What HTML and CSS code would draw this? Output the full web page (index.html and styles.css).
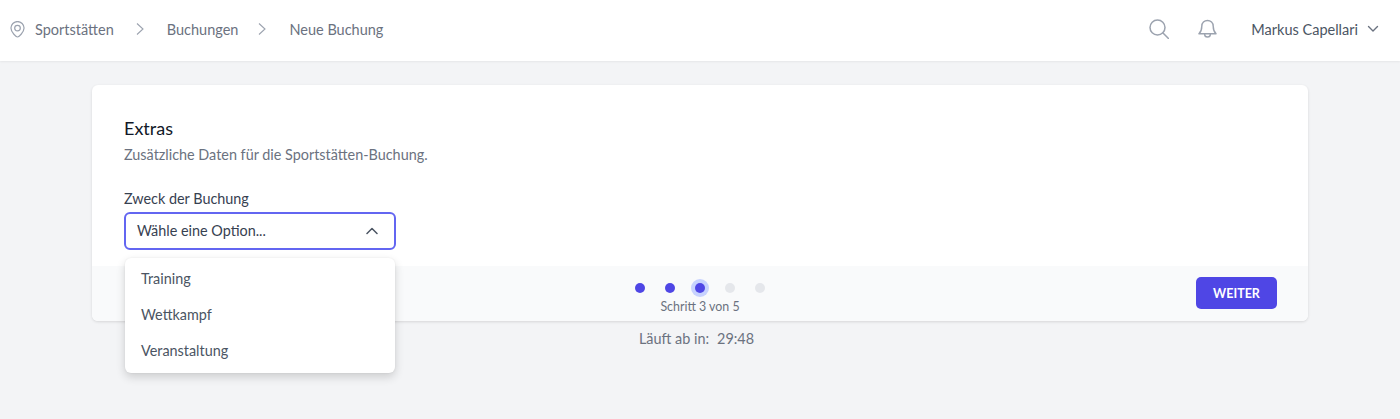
FILE: index.html
```html
<!DOCTYPE html>
<html lang="de">

<head>
  <meta charset="UTF-8" />
  <title>Neue Buchung</title>
  <link rel="stylesheet" href="styles.css">
</head>

<body>
  <header class="topbar">
    <nav class="crumbs">
      <svg class="pin" viewBox="0 0 16 18" fill="none" stroke="currentColor" stroke-width="1.300" stroke-linecap="round" stroke-linejoin="round">
        <path d="M8 17C7 17 1 12.300 1 7.500a7 7 0 0 1 14 0C15 12.300 9 17 8 17z" />
        <circle cx="8" cy="7.500" r="3" />
      </svg>
      <a>Sportstätten</a>
      <svg class="sep" viewBox="0 0 10 14" fill="none" stroke="currentColor" stroke-width="1.100"><path d="M2 1.500 8 7l-6 5.500" /></svg>
      <a>Buchungen</a>
      <svg class="sep sep-tight" viewBox="0 0 10 14" fill="none" stroke="currentColor" stroke-width="1.100"><path d="M2 1.500 8 7l-6 5.500" /></svg>
      <a>Neue Buchung</a>
    </nav>
    <div class="tools">
      <svg class="search" viewBox="0 0 20 20" fill="none" stroke="currentColor" stroke-width="1.500" stroke-linecap="round"><circle cx="8.500" cy="8.500" r="7.500" /><path d="m14 14 5.500 5.500" /></svg>
      <svg class="bell" viewBox="0 0 20 20" fill="none" stroke="currentColor" stroke-width="1.500" stroke-linecap="round" stroke-linejoin="round"><path d="M10 1a6 6 0 0 0-6 6c0 5-1.500 6.500-3 8h18c-1.500-1.500-3-3-3-8a6 6 0 0 0-6-6z" /><path d="M7 15.500a3 3 0 0 0 6 0" /></svg>
      <div class="user">
        <span>Markus Capellari</span>
        <svg class="user-caret" viewBox="0 0 12 8" fill="none" stroke="currentColor" stroke-width="1.400" stroke-linecap="round" stroke-linejoin="round"><path d="m1.500 1.500 4.500 4.500 4.500-4.500" /></svg>
      </div>
    </div>
  </header>

  <main class="content">
    <section class="card">
      <div class="card-body">
        <h2>Extras</h2>
        <p class="hint">Zusätzliche Daten für die Sportstätten-Buchung.</p>
        <label class="field-label">Zweck der Buchung</label>
        <div class="select-wrap">
          <div class="select">
            <span>Wähle eine Option...</span>
            <svg class="select-caret" viewBox="0 0 12 8" fill="none" stroke="currentColor" stroke-width="1.500" stroke-linecap="round" stroke-linejoin="round"><path d="m1 6.500 5-5 5 5" /></svg>
          </div>
          <ul class="options">
            <li>Training</li>
            <li>Wettkampf</li>
            <li>Veranstaltung</li>
          </ul>
        </div>
      </div>
      <div class="card-foot">
        <div class="steps">
          <div class="dots">
            <span class="dot done"></span>
            <span class="dot done"></span>
            <span class="dot current"></span>
            <span class="dot"></span>
            <span class="dot"></span>
          </div>
          <p class="step-text">Schritt 3 von 5</p>
        </div>
        <button class="next">WEITER</button>
      </div>
    </section>
    <p class="timer"><span>Läuft ab in:</span><span>29:48</span></p>
  </main>
</body>

</html>
```

FILE: styles.css
```css
/* Base */
body {
  margin: 0;
  height: 419px;
  overflow: hidden;
  font-family: 'Lato', 'Noto Sans', sans-serif;
  font-size: 14.4px;
  background-color: #f3f4f6;
  color: #4b5563;
}

/* Top bar */
.topbar {
  height: 61px;
  box-sizing: border-box;
  background-color: #fff;
  box-shadow: 0 1px 2px rgba(0, 0, 0, 0.06);
  display: flex;
  justify-content: space-between;
  align-items: center;
  padding: 0 21px 3px 10px;
  font-size: 14.5px;
}

.crumbs {
  display: flex;
  align-items: center;
  color: #6b7280;
}

.pin {
  width: 15px;
  height: 17px;
  margin-right: 10px;
  color: #9ca3af;
}

.sep {
  width: 10px;
  height: 14px;
  margin: 0 22px 0 21px;
  color: #9ca3af;
}

.sep-tight {
  margin: 0 22px 0 19px;
}

.tools {
  display: flex;
  align-items: center;
  color: #9ca3af;
}

.search {
  width: 20px;
  height: 20px;
}

.bell {
  width: 19px;
  height: 20px;
  margin-left: 29px;
}

.user {
  display: flex;
  align-items: center;
  margin-left: 34px;
  color: #4b5563;
}

.user-caret {
  width: 12px;
  height: 8px;
  margin-left: 9px;
  color: #6b7280;
}

/* Card */
.content {
  width: 1216px;
  margin: 24px auto 0;
}

.card {
  background-color: #fff;
  border-radius: 6px;
  box-shadow: 0 1px 3px rgba(0, 0, 0, 0.12);
}

.card-body {
  height: 181px;
  box-sizing: border-box;
  padding: 31px 32px 0;
}

.card-body h2 {
  margin: 0;
  font-size: 18px;
  line-height: 24px;
  font-weight: 400;
  color: #111827;
}

.hint {
  margin: 5px 0 0;
  line-height: 20px;
  color: #6b7280;
}

.field-label {
  display: block;
  margin-top: 24px;
  line-height: 20px;
  color: #374151;
}

/* Select with open menu */
.select-wrap {
  position: relative;
  width: 272px;
  margin-top: 3px;
}

.select {
  height: 38px;
  box-sizing: border-box;
  display: flex;
  justify-content: space-between;
  align-items: center;
  padding: 0 16px 1px 11px;
  background-color: #fff;
  border: 2px solid #6366f1;
  border-radius: 6px;
  color: #374151;
}

.select-caret {
  width: 12px;
  height: 8px;
  color: #4b5563;
}

.options {
  position: absolute;
  top: 46px;
  left: 1px;
  right: 1px;
  z-index: 10;
  margin: 0;
  padding: 3px 0 4px;
  list-style: none;
  background-color: #fff;
  border-radius: 6px;
  box-shadow: 0 4px 10px rgba(0, 0, 0, 0.16), 0 0 2px rgba(0, 0, 0, 0.08);
}

.options li {
  height: 36px;
  line-height: 36px;
  padding-left: 16px;
  color: #4b5563;
}

/* Card footer */
.card-foot {
  height: 55px;
  box-sizing: border-box;
  padding: 11px 31px 0;
  position: relative;
  display: flex;
  justify-content: flex-end;
  align-items: flex-start;
  background-color: #f9fafb;
  border-radius: 0 0 6px 6px;
}

.steps {
  position: absolute;
  top: 17px;
  left: 0;
  right: 0;
  display: flex;
  flex-direction: column;
  align-items: center;
}

.dots {
  display: flex;
  gap: 20px;
  align-items: center;
  height: 10px;
}

.dot {
  width: 10px;
  height: 10px;
  border-radius: 50%;
  background-color: #e5e7eb;
}

.dot.done,
.dot.current {
  background-color: #4f46e5;
}

.dot.current {
  box-shadow: 0 0 0 4px #c7d2fe;
}

.step-text {
  margin: 7px 0 0;
  font-size: 12.4px;
  line-height: 14px;
  color: #6b7280;
}

.next {
  width: 81px;
  height: 32px;
  padding: 0;
  border: none;
  border-radius: 5px;
  background-color: #4f46e5;
  color: #fff;
  font-family: inherit;
  font-size: 12.5px;
  font-weight: 700;
}

.timer {
  display: flex;
  justify-content: center;
  gap: 8px;
  margin: 9px 0 0;
  padding-right: 7px;
  line-height: 18px;
  color: #6b7280;
}
```
